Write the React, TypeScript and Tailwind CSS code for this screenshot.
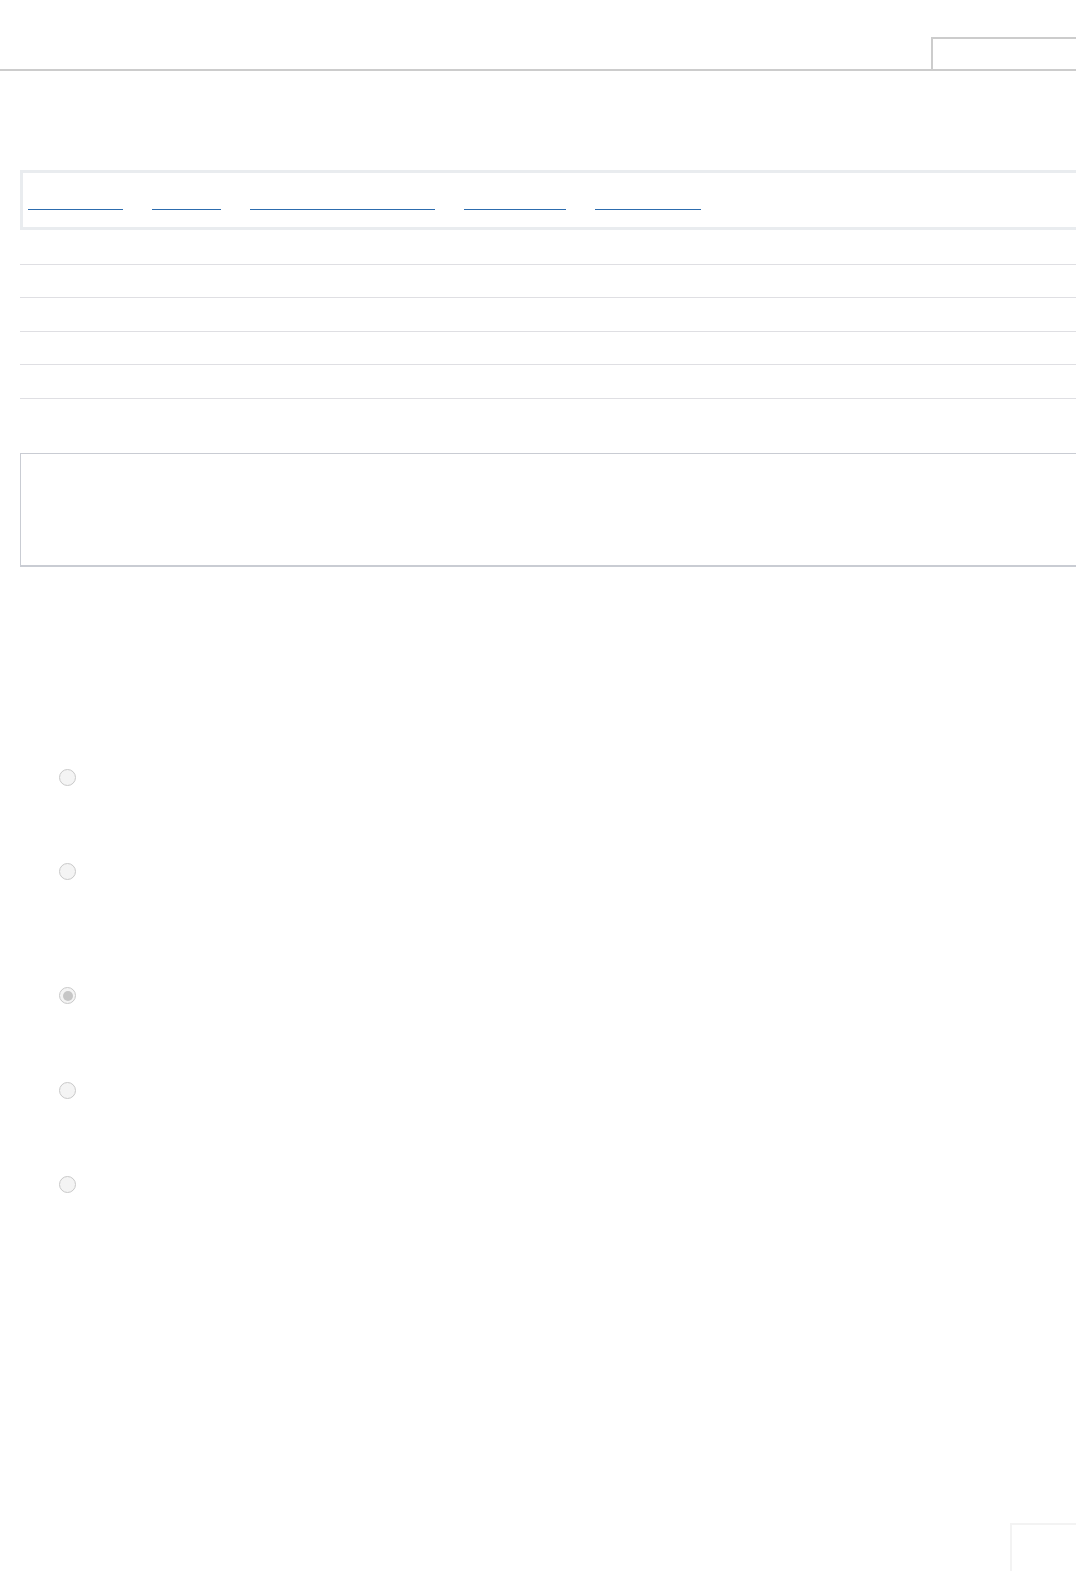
import React from 'react';

const linkWidths = [95, 69, 185, 102, 106];

const Radio = ({ checked = false }: { checked?: boolean }) => (
  <span className="flex h-[17px] w-[17px] items-center justify-center rounded-full border border-[#c9c9c9] bg-[#f4f4f4]">
    {checked && <span className="h-[10px] w-[10px] rounded-full bg-[#c6c6c6]"></span>}
  </span>
);

const App = () => {
  return (
    <div className="relative min-h-[1571px] w-[1076px] overflow-hidden bg-white font-['Liberation_Sans',sans-serif]">
      {/* header with the tab */}
      <div className="flex h-[71px] items-end border-b-2 border-[#cccccc] pl-[931px]">
        <div className="h-[32px] w-[300px] shrink-0 border-l-2 border-t-2 border-[#cccccc]"></div>
      </div>

      {/* link bar */}
      <div className="ml-[20px] mt-[99px] h-[60px] w-[1100px] border-[3px] border-[#e9ecef] px-[5px]">
        <div className="mt-[36px] flex gap-[29px]">
          {linkWidths.map((w, i) => (
            <a key={i} href="#" className="block h-px bg-[#2d6cae]" style={{ width: w }}></a>
          ))}
        </div>
      </div>

      {/* table rows */}
      <div className="ml-[20px] mt-[34px] w-[1100px]">
        <div className="h-[33px] border-t border-[#dfdfe3]"></div>
        <div className="h-[34px] border-t border-[#dfdfe3]"></div>
        <div className="h-[33px] border-t border-[#dfdfe3]"></div>
        <div className="h-[35px] border-y border-[#dfdfe3]"></div>
      </div>

      {/* panel */}
      <div className="ml-[20px] mt-[54px] h-[114px] w-[1100px] border border-b-2 border-[#c9ccd3]"></div>

      {/* options */}
      <div className="mt-[202px] flex flex-col pl-[59px]">
        <Radio />
        <div className="mt-[77px]"><Radio /></div>
        <div className="mt-[107px]"><Radio checked /></div>
        <div className="mt-[78px]"><Radio /></div>
        <div className="mt-[77px]"><Radio /></div>
      </div>

      {/* corner widget */}
      <div className="absolute left-[1010px] top-[1523px] h-[60px] w-[100px] border-2 border-[#f3f3f3]"></div>
    </div>
  );
};

export default App;
